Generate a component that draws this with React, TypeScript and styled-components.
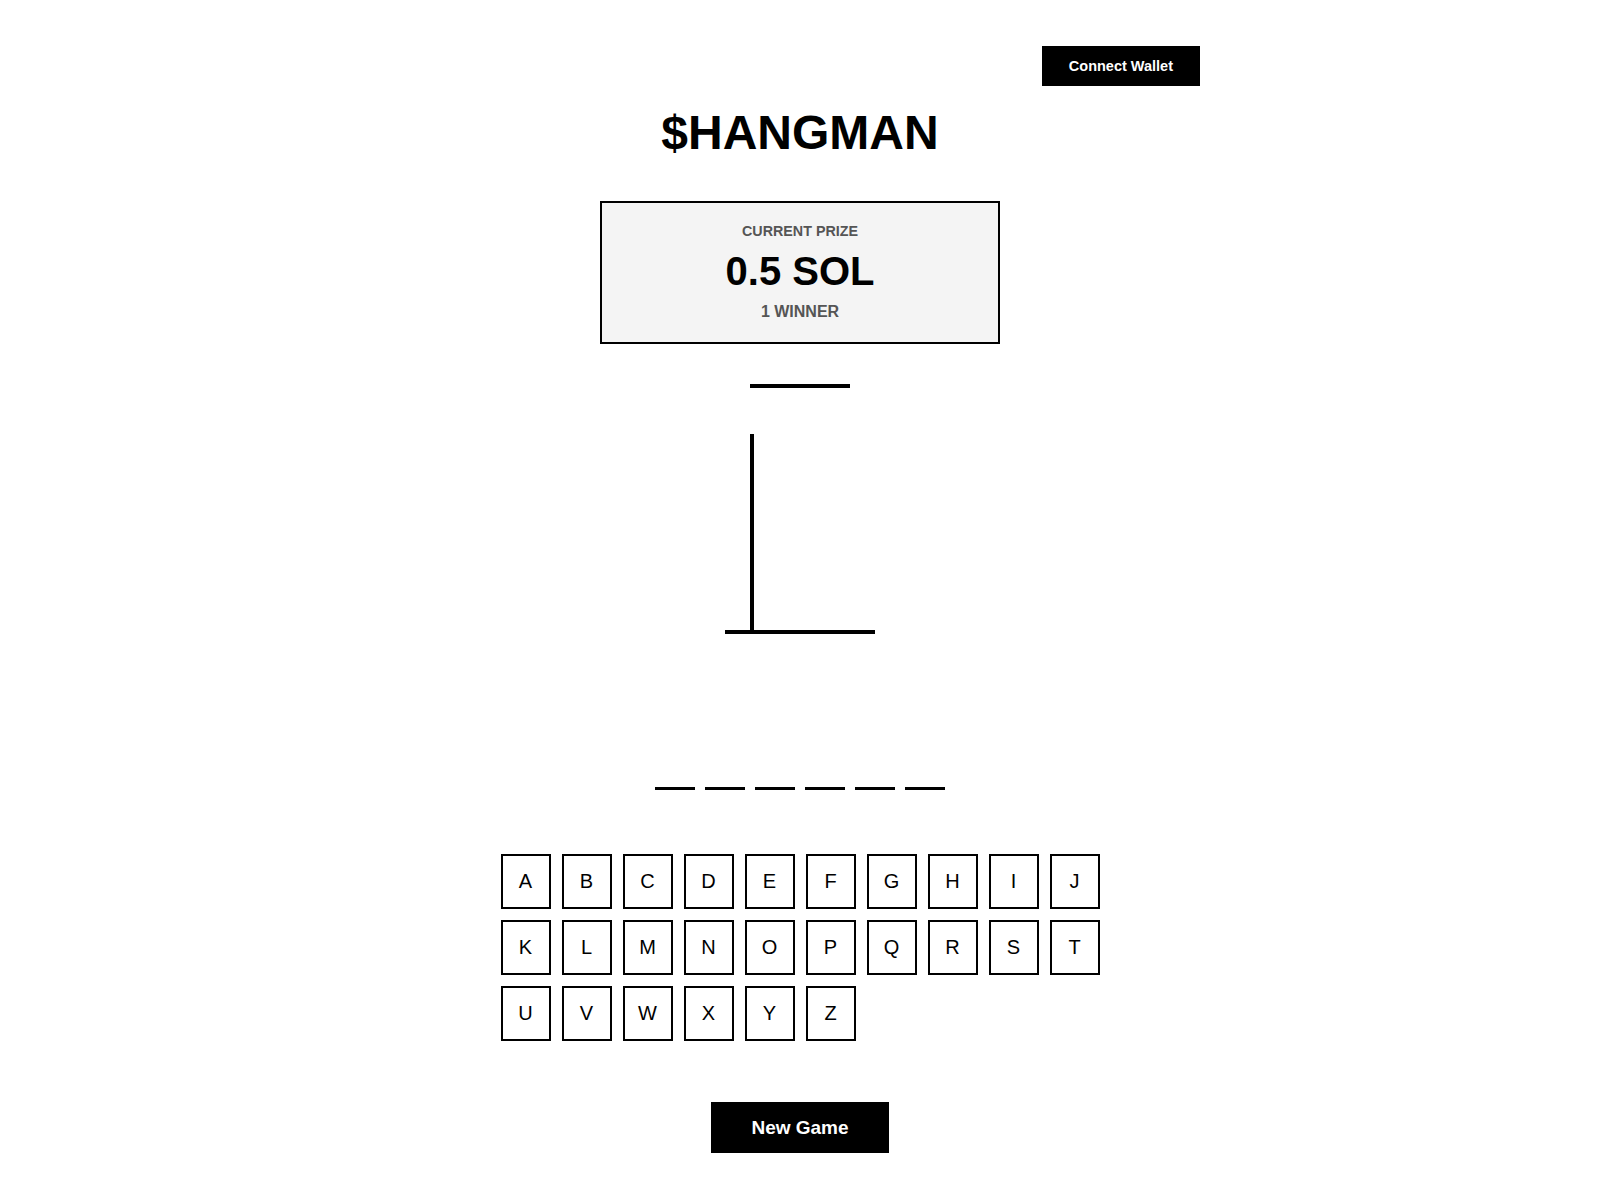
import styled, { createGlobalStyle } from 'styled-components';

const GlobalStyle = createGlobalStyle`
  html, body {
    margin: 0;
    padding: 0;
    background: #ffffff;
  }
  body {
    font-family: "Liberation Sans", Arial, sans-serif;
    color: #000000;
  }
  * {
    box-sizing: border-box;
  }
`

const LETTERS = 'ABCDEFGHIJKLMNOPQRSTUVWXYZ'.split('');
const WORD_LENGTH = 6;

const Gallows = () => (
    <svg width="200" height="260" viewBox="0 0 200 260">
        <line x1="50" y1="6" x2="150" y2="6" stroke="#000" strokeWidth="4" />
        <line x1="52" y1="54" x2="52" y2="252" stroke="#000" strokeWidth="4" />
        <line x1="25" y1="252" x2="175" y2="252" stroke="#000" strokeWidth="4" />
    </svg>
);

const App = () => {
    return (
        <>
            <GlobalStyle />
            <Page>
                <Header>
                    <WalletButton>Connect Wallet</WalletButton>
                </Header>
                <Title>$HANGMAN</Title>
                <PrizeBox>
                    <PrizeLabel>CURRENT PRIZE</PrizeLabel>
                    <PrizeAmount>0.5 SOL</PrizeAmount>
                    <PrizeLabel $big>1 WINNER</PrizeLabel>
                </PrizeBox>
                <DrawingArea>
                    <Gallows />
                </DrawingArea>
                <Word>
                    {Array.from({ length: WORD_LENGTH }).map((_, i) => (
                        <Blank key={i} />
                    ))}
                </Word>
                <Keyboard>
                    {LETTERS.map((letter) => (
                        <Key key={letter}>{letter}</Key>
                    ))}
                </Keyboard>
                <NewGameButton>New Game</NewGameButton>
            </Page>
        </>
    );
}

export default App;

const Page = styled.div`
  display: flex;
  flex-direction: column;
  align-items: center;
  padding-top: 46px;
  padding-bottom: 40px;
`

const Header = styled.div`
  width: 800px;
  display: flex;
  justify-content: flex-end;
`

const WalletButton = styled.button`
  background: #000000;
  color: #ffffff;
  border: none;
  font-family: "Liberation Sans", Arial, sans-serif;
  font-weight: 700;
  font-size: 14.5px;
  line-height: 16px;
  padding: 12px 27px;
  cursor: pointer;
`

const Title = styled.h1`
  margin: 19px 0 0 0;
  font-size: 48px;
  font-weight: 700;
  line-height: 55px;
`

const PrizeBox = styled.div`
  margin-top: 41px;
  width: 400px;
  height: 143px;
  border: 2px solid #000000;
  background: #f4f4f4;
  display: flex;
  flex-direction: column;
  align-items: center;
  padding-top: 20px;
`

const PrizeLabel = styled.div<{ $big?: boolean }>`
  font-size: ${props => props.$big ? '16px' : '14.3px'};
  line-height: ${props => props.$big ? '18px' : '16px'};
  font-weight: 700;
  color: #555555;
`

const PrizeAmount = styled.div`
  margin: 9px 0 9px 0;
  font-size: 40px;
  line-height: 46px;
  font-weight: 700;
`

const DrawingArea = styled.div`
  margin-top: 36px;
  width: 200px;
  height: 260px;
  svg {
    display: block;
  }
`

const Word = styled.div`
  margin-top: 147px;
  display: flex;
  gap: 10px;
`

const Blank = styled.div`
  width: 40px;
  height: 3px;
  background: #000000;
`

const Keyboard = styled.div`
  margin-top: 64px;
  display: grid;
  grid-template-columns: repeat(10, 50px);
  gap: 11px;
`

const Key = styled.button`
  width: 50px;
  height: 55px;
  padding: 0;
  background: #ffffff;
  border: 2px solid #000000;
  font-family: "Liberation Sans", Arial, sans-serif;
  font-size: 20px;
  color: #000000;
  cursor: pointer;
`

const NewGameButton = styled.button`
  margin-top: 61px;
  width: 178px;
  height: 51px;
  background: #000000;
  color: #ffffff;
  border: none;
  font-family: "Liberation Sans", Arial, sans-serif;
  font-weight: 700;
  font-size: 19px;
  cursor: pointer;
`
